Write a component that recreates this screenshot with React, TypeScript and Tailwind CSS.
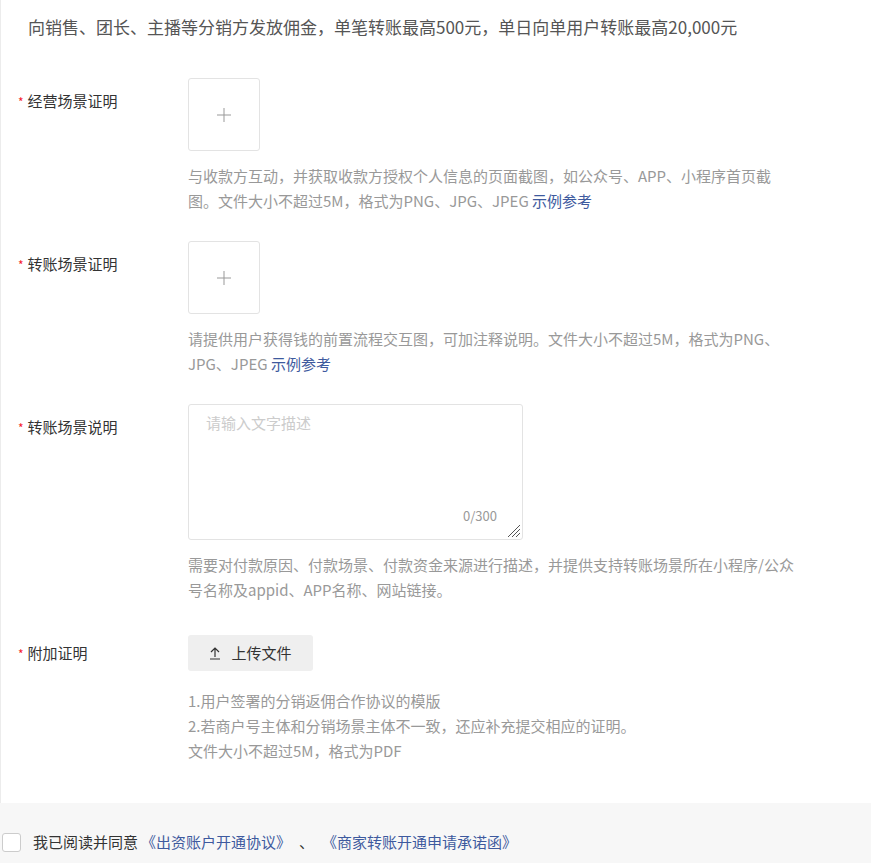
const font = { fontFamily: '"Noto Sans CJK SC", "Liberation Sans", sans-serif' };

function Label({ text, pt }: { text: string; pt: string }) {
  return (
    <div className={`w-[187px] shrink-0 pl-[17px] ${pt} text-[15px] leading-[22px] text-[#333]`}>
      <span className="mr-[4px] text-[12px] text-[#f5222d]">*</span>
      {text}
    </div>
  );
}

function UploadBox() {
  return (
    <div className="flex h-[73px] w-[72px] items-center justify-center rounded-[3px] border border-[#e3e3e3] bg-white">
      <svg width="16" height="16" viewBox="0 0 16 16">
        <path d="M8 1v14M1 8h14" stroke="#999" strokeWidth="1" />
      </svg>
    </div>
  );
}

function Hint({ children }: { children: React.ReactNode }) {
  return <div className="mt-[12px] w-[612px] text-[15px] leading-[25px] text-[#999]">{children}</div>;
}

const Link = ({ t }: { t: string }) => <span className="text-[#3e5a9e]">{t}</span>;

export default function App() {
  return (
    <div style={font} className="min-h-[863px] bg-[#f7f7f7]">
      <div className="border-l border-[#ececec] bg-white pb-[40px]">
        <div className="pl-[27px] pt-[14px] text-[17px] leading-[26px] text-[#555]">
          向销售、团长、主播等分销方发放佣金，单笔转账最高500元，单日向单用户转账最高20,000元
        </div>
        <div className="mt-[38px] flex">
          <Label text="经营场景证明" pt="pt-[12px]" />
          <div>
            <UploadBox />
            <Hint>
              与收款方互动，并获取收款方授权个人信息的页面截图，如公众号、APP、小程序首页截图。文件大小不超过5M，格式为PNG、JPG、JPEG <Link t="示例参考" />
            </Hint>
          </div>
        </div>
        <div className="mt-[28px] flex">
          <Label text="转账场景证明" pt="pt-[12px]" />
          <div>
            <UploadBox />
            <Hint>
              请提供用户获得钱的前置流程交互图，可加注释说明。文件大小不超过5M，格式为PNG、JPG、JPEG <Link t="示例参考" />
            </Hint>
          </div>
        </div>
        <div className="mt-[28px] flex">
          <Label text="转账场景说明" pt="pt-[12px]" />
          <div>
            <div className="relative h-[136px] w-[335px] rounded-[3px] border border-[#e3e3e3]">
              <div className="px-[17px] pt-[7px] text-[15px] leading-[22px] text-[#ccc]">请输入文字描述</div>
              <div className="absolute bottom-[14px] right-[25px] text-[13px] text-[#999]">0/300</div>
              <svg className="absolute bottom-[1px] right-[1px]" width="14" height="14" viewBox="0 0 14 14">
                <path d="M13 1L1 13M13 5L5 13M13 9L9 13" stroke="#555" strokeWidth="1" />
              </svg>
            </div>
            <Hint>
              需要对付款原因、付款场景、付款资金来源进行描述，并提供支持转账场景所在小程序/公众号名称及appid、APP名称、网站链接。
            </Hint>
          </div>
        </div>
        <div className="mt-[33px] flex">
          <Label text="附加证明" pt="pt-[7px]" />
          <div>
            <div className="flex h-[36px] w-[125px] items-center justify-center gap-[10px] rounded-[3px] bg-[#efefef] text-[15px] text-[#333]">
              <svg width="12" height="14" viewBox="0 0 12 14">
                <path d="M6 11V2M2 6l4-4 4 4M1 13h10" stroke="#333" strokeWidth="1.2" fill="none" />
              </svg>
              上传文件
            </div>
            <div className="mt-[17px] text-[15px] leading-[25px] text-[#999]">
              <div>1.用户签署的分销返佣合作协议的模版</div>
              <div>2.若商户号主体和分销场景主体不一致，还应补充提交相应的证明。</div>
              <div>文件大小不超过5M，格式为PDF</div>
            </div>
          </div>
        </div>
      </div>
      <div className="flex items-center pt-[28px] text-[15px]">
        <div className="ml-[2px] h-[19px] w-[19px] rounded-[3px] border border-[#ccc] bg-white" />
        <span className="ml-[12px] text-[#333]">我已阅读并同意</span>
        <span className="ml-[3px] text-[#3e5a9e]">《出资账户开通协议》</span>
        <span className="mx-[8px] text-[#333]">、</span>
        <span className="text-[#3e5a9e]">《商家转账开通申请承诺函》</span>
      </div>
    </div>
  );
}
